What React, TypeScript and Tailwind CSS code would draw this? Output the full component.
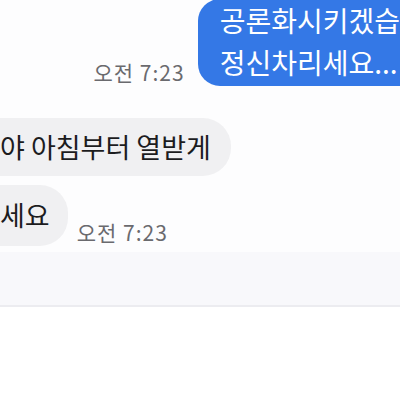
import React from 'react';

const font = { fontFamily: '"Noto Sans CJK KR", "Noto Sans", sans-serif' };

const App: React.FC = () => {
  return (
    <div className="w-[400px] h-[400px] overflow-hidden bg-[#fdfdfe] flex flex-col" style={font}>
      {/* outgoing message */}
      <div className="flex items-end justify-end gap-[13px] mt-[-1px]">
        <span className="text-[21px] leading-[26px] tracking-[1px] text-[#6a6a6e] mb-[1px] whitespace-nowrap">오전 7:23</span>
        <div className="bg-[#3478e6] text-white rounded-l-[22px] pl-[22px] pb-[3px] text-[28px] leading-[42px] whitespace-nowrap">
          <div>공론화시키겠습</div>
          <div>정신차리세요...</div>
        </div>
      </div>

      {/* incoming messages */}
      <div className="flex flex-col gap-[9px] mt-[32px]">
        <div className="flex items-end">
          <div className="bg-[#f0f0f2] text-[#1c1c1e] rounded-r-[28px] ml-[-10px] pl-[10px] pr-[20px] h-[58px] flex items-center text-[27px] whitespace-nowrap">
            야 아침부터 열받게
          </div>
        </div>
        <div className="flex items-end gap-[9px]">
          <div className="bg-[#f0f0f2] text-[#1c1c1e] rounded-r-[28px] ml-[-2px] pl-[2px] pr-[18px] h-[61px] flex items-center text-[27px] whitespace-nowrap">
            세요
          </div>
          <span className="text-[21px] leading-[26px] tracking-[1px] text-[#6a6a6e] mb-[1px] whitespace-nowrap">오전 7:23</span>
        </div>
      </div>

      {/* bottom area */}
      <div className="mt-[6px] h-[53px] bg-[#f8f8fb]" />
      <div className="h-[2px] bg-[#ececf0]" />
      <div className="flex-1 bg-white" />
    </div>
  );
};

export default App;
